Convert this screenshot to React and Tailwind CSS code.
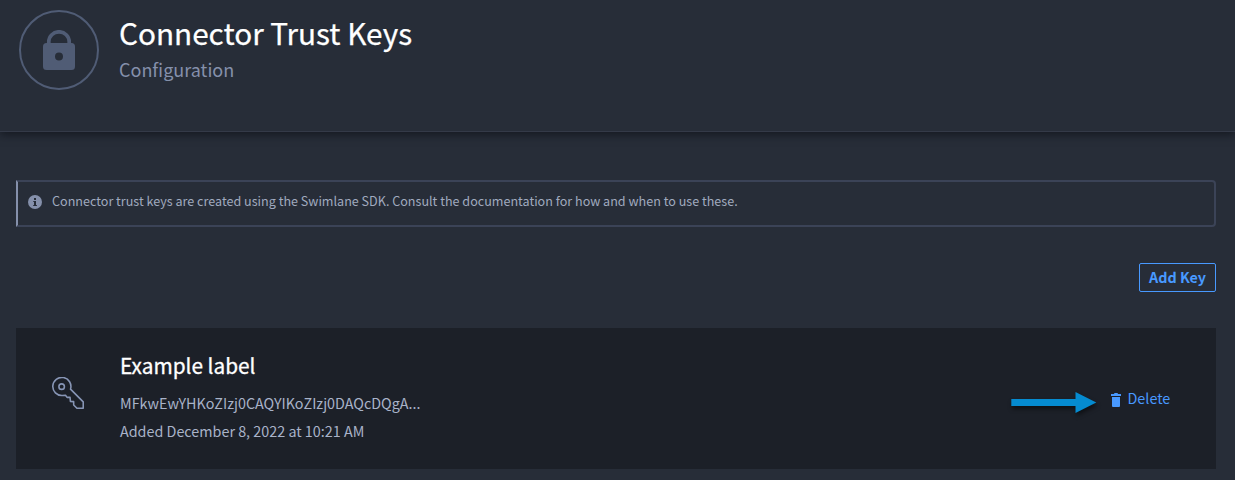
function LockIcon() {
  return (
    <svg width="32" height="40" viewBox="0 0 32 40" className="text-[#505c75]">
      <path d="M5.800 15V11.800a10.200 10 0 0 1 20.400 0v3.200" fill="none" stroke="currentColor" strokeWidth="3.700" />
      <path
        fillRule="evenodd"
        fill="currentColor"
        d="M3.500 13h25a3.500 3.500 0 0 1 3.500 3.500v20a3.500 3.500 0 0 1-3.500 3.500h-25A3.500 3.500 0 0 1 0 36.500v-20A3.500 3.500 0 0 1 3.500 13zM16 22.500a4 4 0 1 0 0 8a4 4 0 1 0 0-8z"
      />
    </svg>
  );
}

function InfoIcon() {
  return (
    <svg width="14" height="14" viewBox="0 0 14 14" className="shrink-0">
      <circle cx="7" cy="7" r="7" fill="#8590ab" />
      <path d="M6 3h2v2H6zM5.300 6H8v4h.9v1H5.200v-1H6V7h-.7z" fill="#272d38" />
    </svg>
  );
}

function KeyIcon() {
  return (
    <svg width="33" height="33" viewBox="0 0 33.500 33.500" fill="none" stroke="#8795b5" strokeWidth="1.600" strokeLinejoin="round">
      <circle cx="9.800" cy="9.800" r="2.800" />
      <path d="M18.800 12.300A9.200 9.200 0 1 0 10.500 18.800L13.700 18.600L15.300 20.700L18.300 20.600L18.700 24.800L22 25L22 28.400L25.300 31.700H31.700V25.200Z" />
    </svg>
  );
}

function TrashIcon() {
  return (
    <svg width="10" height="14" viewBox="0 0 10 14" fill="#4899ff">
      <path d="M3.500 0h3l.5 1h3v2H0V1h3zM1 4h8v9a1 1 0 0 1-1 1H2a1 1 0 0 1-1-1z" />
    </svg>
  );
}

function Arrow() {
  return (
    <svg width="86" height="22" viewBox="0 0 86 22" className="overflow-visible drop-shadow-[1px_3px_2px_rgba(0,0,0,0.5)]">
      <path d="M0.300 7H64.500V0L85.300 10.500L64.500 21V14H0.300z" fill="#058bd0" />
    </svg>
  );
}

export default function App() {
  return (
    <div className="h-[480px] w-[1235px] overflow-hidden bg-[#272d38] font-['Noto_Sans_CJK_SC',sans-serif] whitespace-nowrap">
      <header className="flex h-[132px] border-b border-[#343a48] pt-[10px] pl-[19px] shadow-[0_3px_8px_rgba(10,13,20,0.6)]">
        <div className="flex size-20 items-center justify-center rounded-full border-2 border-[#505c75]">
          <LockIcon />
        </div>
        <div className="ml-5">
          <h1 className="mt-[3px] h-10 text-[29.700px] leading-10 text-white [-webkit-text-stroke:0.25px_white]">
            Connector Trust Keys
          </h1>
          <p className="mt-[4px] text-[18px] leading-6 text-[#8590ab]">Configuration</p>
        </div>
      </header>

      <main className="pt-12 pr-[19px] pl-4">
        <div className="flex h-[47px] items-start rounded-r-sm border-2 border-[#3b4357] border-l-[#8590ab] pt-[9px] pl-[10px]">
          <div className="pt-[4px]">
            <InfoIcon />
          </div>
          <p className="ml-[10px] text-[12.580px] leading-5 text-[#a0aabf]">
            Connector trust keys are created using the Swimlane SDK. Consult the documentation for how and when to use these.
          </p>
        </div>

        <div className="mt-9 flex justify-end">
          <button className="h-[29px] w-[77px] rounded-[2px] border border-[#4899ff] pb-[2px] text-[14.330px] leading-[25px] font-bold text-[#4899ff]">
            Add Key
          </button>
        </div>

        <section className="mt-9 flex h-[141px] bg-[#1c2028]">
          <div className="w-[104px] pt-[49px] pl-[36px]">
            <KeyIcon />
          </div>
          <div className="flex-1 text-[#a9b3c8]">
            <h2 className="mt-[21px] text-[20.800px] leading-8 text-white [-webkit-text-stroke:0.3px_white]">Example label</h2>
            <p className="mt-[8px] text-[14.340px] leading-7">MFkwEwYHKoZIzj0CAQYIKoZIzj0DAQcDQgA...</p>
            <p className="text-[14.350px] leading-7">Added December 8, 2022 at 10:21 AM</p>
          </div>
          <div className="flex w-[205px] items-start pt-[58px]">
            <div className="mt-[6px]">
              <Arrow />
            </div>
            <button className="ml-[14px] flex gap-[6.500px] text-[14.350px] leading-6 text-[#4899ff]">
              <span className="pt-[7px]">
                <TrashIcon />
              </span>
              Delete
            </button>
          </div>
        </section>
      </main>
    </div>
  );
}
